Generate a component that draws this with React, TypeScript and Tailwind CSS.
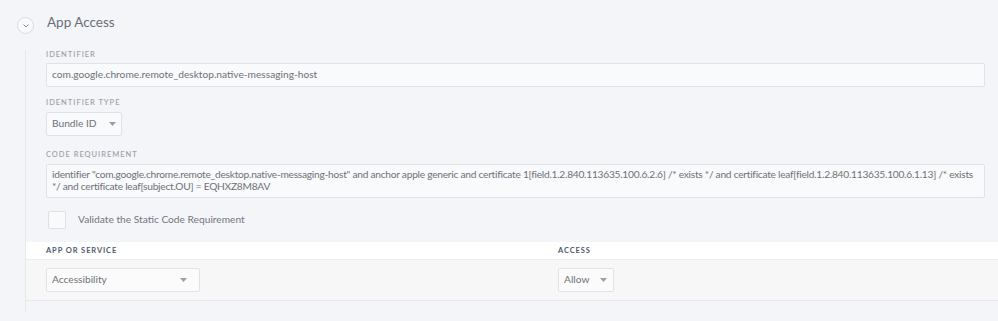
import React from "react";

const Caret = () => (
  <svg width="7" height="4" viewBox="0 0 7 4" className="shrink-0">
    <path d="M0 0 L7 0 L3.5 4 Z" fill="#9aa0ab" />
  </svg>
);

const Label = ({ children, className = "" }: { children: React.ReactNode; className?: string }) => (
  <div className={"h-[10px] flex items-center text-[7.5px] tracking-[0.13em] text-[#a0a3aa] font-semibold whitespace-nowrap " + className}>
    {children}
  </div>
);

export default function App() {
  const font = { fontFamily: "Lato, 'Open Sans', sans-serif" };
  return (
    <div className="w-[998px] h-[321px] bg-[#f4f5f9] overflow-hidden text-[#555]" style={font}>
      <div className="flex items-start h-[48px] pl-[17px]">
        <div className="mt-[17px] w-[17px] h-[17px] rounded-full border border-[#d9dbe1] bg-[#f8f9fb] flex items-center justify-center">
          <svg width="6" height="4" viewBox="0 0 6 4">
            <path d="M0.5 0.5 L3 3 L5.5 0.5" fill="none" stroke="#8a8f99" strokeWidth="1" />
          </svg>
        </div>
        <div className="ml-[13px] mt-[16px] text-[13.5px] text-[#6b6e75] leading-none">App Access</div>
      </div>
      <div className="ml-[25px] border-l border-[#e6e7eb] h-[262px]">
        <div className="pl-[20px] pr-[13px]">
          <Label className="mt-[2px]">IDENTIFIER</Label>
          <div className="mt-[3px] h-[24px] bg-[#f9fafc] border border-[#e0e2e7] rounded-[2px] flex items-center px-[5px] text-[10.2px] text-[#6e7177] whitespace-nowrap">
            com.google.chrome.remote_desktop.native-messaging-host
          </div>
          <Label className="mt-[11px]">IDENTIFIER TYPE</Label>
          <div className="mt-[4px] w-[76px] h-[24px] bg-[#f9fafc] border border-[#e0e2e7] rounded-[2px] flex items-center px-[5px] text-[10.2px] text-[#6e7177] gap-[12px] whitespace-nowrap">
            <span>Bundle ID</span>
            <Caret />
          </div>
          <Label className="mt-[14px]">CODE REQUIREMENT</Label>
          <div className="mt-[4px] w-[939px] h-[34px] bg-[#f9fafc] border border-[#e0e2e7] rounded-[2px] px-[5px] pt-[4px] text-[10.2px] leading-[11.5px] tracking-[-0.025em] text-[#6e7177] whitespace-nowrap overflow-hidden">
            identifier "com.google.chrome.remote_desktop.native-messaging-host" and anchor apple generic and certificate 1[field.1.2.840.113635.100.6.2.6] /* exists */ and certificate leaf[field.1.2.840.113635.100.6.1.13] /* exists
            <br />
            */ and certificate leaf[subject.OU] = EQHXZ8M8AV
          </div>
          <div className="mt-[13px] flex items-center h-[18px]">
            <div className="ml-[2px] w-[18px] h-[18px] bg-[#f9fafc] border border-[#dfe1e6] rounded-[2px]" />
            <span className="ml-[12px] text-[10.2px] text-[#73767c] whitespace-nowrap">Validate the Static Code Requirement</span>
          </div>
        </div>
        <div className="mt-[13px] h-[18px] bg-white flex items-center border-b border-[#ececef]">
          <div className="pl-[20px] w-[532px] text-[7.5px] tracking-[0.12em] font-bold text-[#4e5a6e] whitespace-nowrap">APP OR SERVICE</div>
          <div className="text-[7.5px] tracking-[0.12em] font-bold text-[#4e5a6e]">ACCESS</div>
        </div>
        <div className="h-[41px] bg-[#f7f7f8] border-b border-[#e8e9ec] flex items-center">
          <div className="pl-[20px] w-[532px]">
            <div className="w-[154px] h-[24px] bg-[#fbfbfc] border border-[#e0e2e7] rounded-[2px] flex items-center justify-between px-[5px] pr-[12px] text-[10.2px] text-[#6e7177]">
              <span>Accessibility</span>
              <Caret />
            </div>
          </div>
          <div className="w-[56px] h-[24px] bg-[#fbfbfc] border border-[#e0e2e7] rounded-[2px] flex items-center px-[5px] gap-[11px] text-[10.2px] text-[#6e7177]">
            <span>Allow</span>
            <Caret />
          </div>
        </div>
      </div>
    </div>
  );
}
